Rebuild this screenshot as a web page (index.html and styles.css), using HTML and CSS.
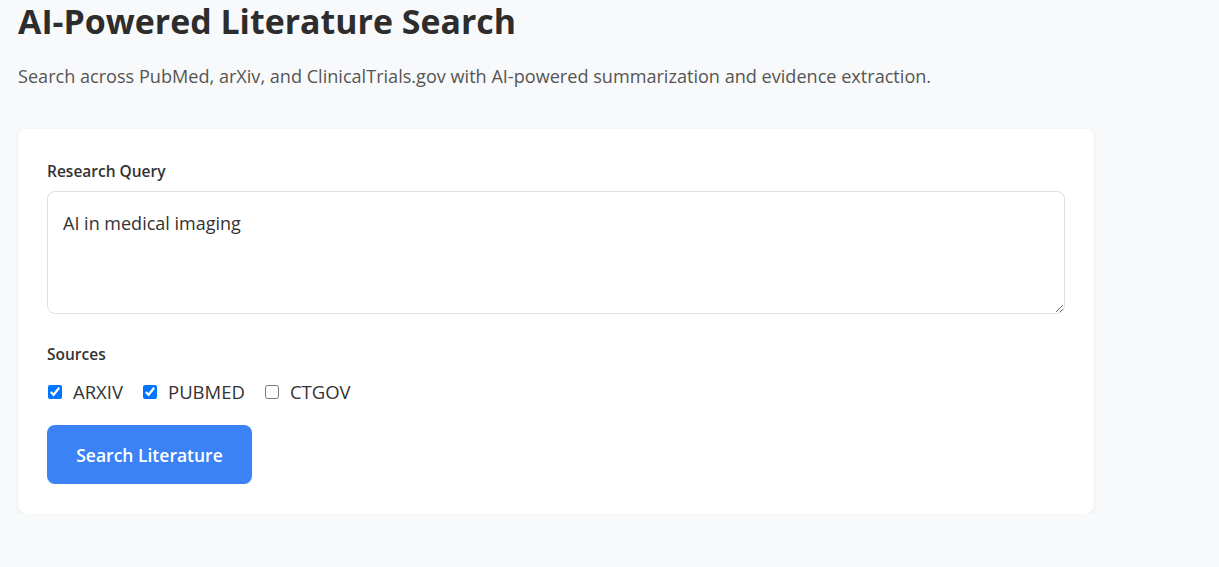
FILE: index.html
```html
<!DOCTYPE html>
<html lang="en">
<head>
<meta charset="utf-8">
<title>AI-Powered Literature Search</title>
<link rel="stylesheet" href="styles.css">
</head>
<body>
<main class="page">
  <h1 class="title">AI-Powered Literature Search</h1>
  <p class="subtitle">Search across PubMed, arXiv, and ClinicalTrials.gov with AI-powered summarization and evidence extraction.</p>
  <section class="card">
    <label class="field-label" for="q">Research Query</label>
    <textarea id="q" class="query">AI in medical imaging</textarea>
    <div class="field-label sources-label">Sources</div>
    <div class="sources">
      <label class="source"><input type="checkbox" checked> ARXIV</label>
      <label class="source"><input type="checkbox" checked> PUBMED</label>
      <label class="source"><input type="checkbox"> CTGOV</label>
    </div>
    <button class="btn" type="button">Search Literature</button>
  </section>
</main>
</body>
</html>
```
FILE: styles.css
```css
html, body {
  margin: 0;
  padding: 0;
  background: #f8f9fa;
}
body {
  font-family: "Open Sans", "Noto Sans", sans-serif;
  color: #333;
}
.page {
  padding: 0 18px;
  width: 1076px;
}
.title {
  margin: 0;
  padding-top: 0;
  font-size: 33.9px;
  font-weight: 700;
  line-height: 42px;
  color: #2d2d2d;
}
.subtitle {
  margin: 22px 0 0;
  font-size: 18.1px;
  line-height: 24px;
  color: #555;
}
.card {
  margin-top: 41px;
  background: #fff;
  border-radius: 8px;
  box-shadow: 0 1px 3px rgba(0,0,0,0.1);
  padding: 31px 29px 29px;
  display: flex;
  flex-direction: column;
  align-items: flex-start;
}
.field-label {
  font-size: 15.5px;
  font-weight: 600;
  line-height: 22px;
  color: #333;
  margin-bottom: 9px;
}
.query {
  box-sizing: border-box;
  width: 100%;
  height: 123px;
  border: 1px solid #e0e0e0;
  border-radius: 8px;
  padding: 19px 15px;
  font-family: inherit;
  font-size: 18px;
  line-height: 24px;
  color: #333;
  resize: vertical;
  margin: 0;
}
.sources-label {
  margin-top: 29px;
  margin-bottom: 14px;
}
.sources {
  display: flex;
  gap: 19px;
  align-items: center;
}
.source {
  display: flex;
  align-items: center;
  gap: 11px;
  font-size: 18.5px;
  line-height: 26px;
  color: #333;
}
.source input {
  margin: 0 0 0 1px;
  width: 14px;
  height: 14px;
}
.btn {
  margin-top: 20px;
  width: 205px;
  height: 59px;
  border: none;
  border-radius: 8px;
  background: #3b82f6;
  color: #fff;
  font-family: inherit;
  font-size: 17.5px;
  font-weight: 600;
}
```
